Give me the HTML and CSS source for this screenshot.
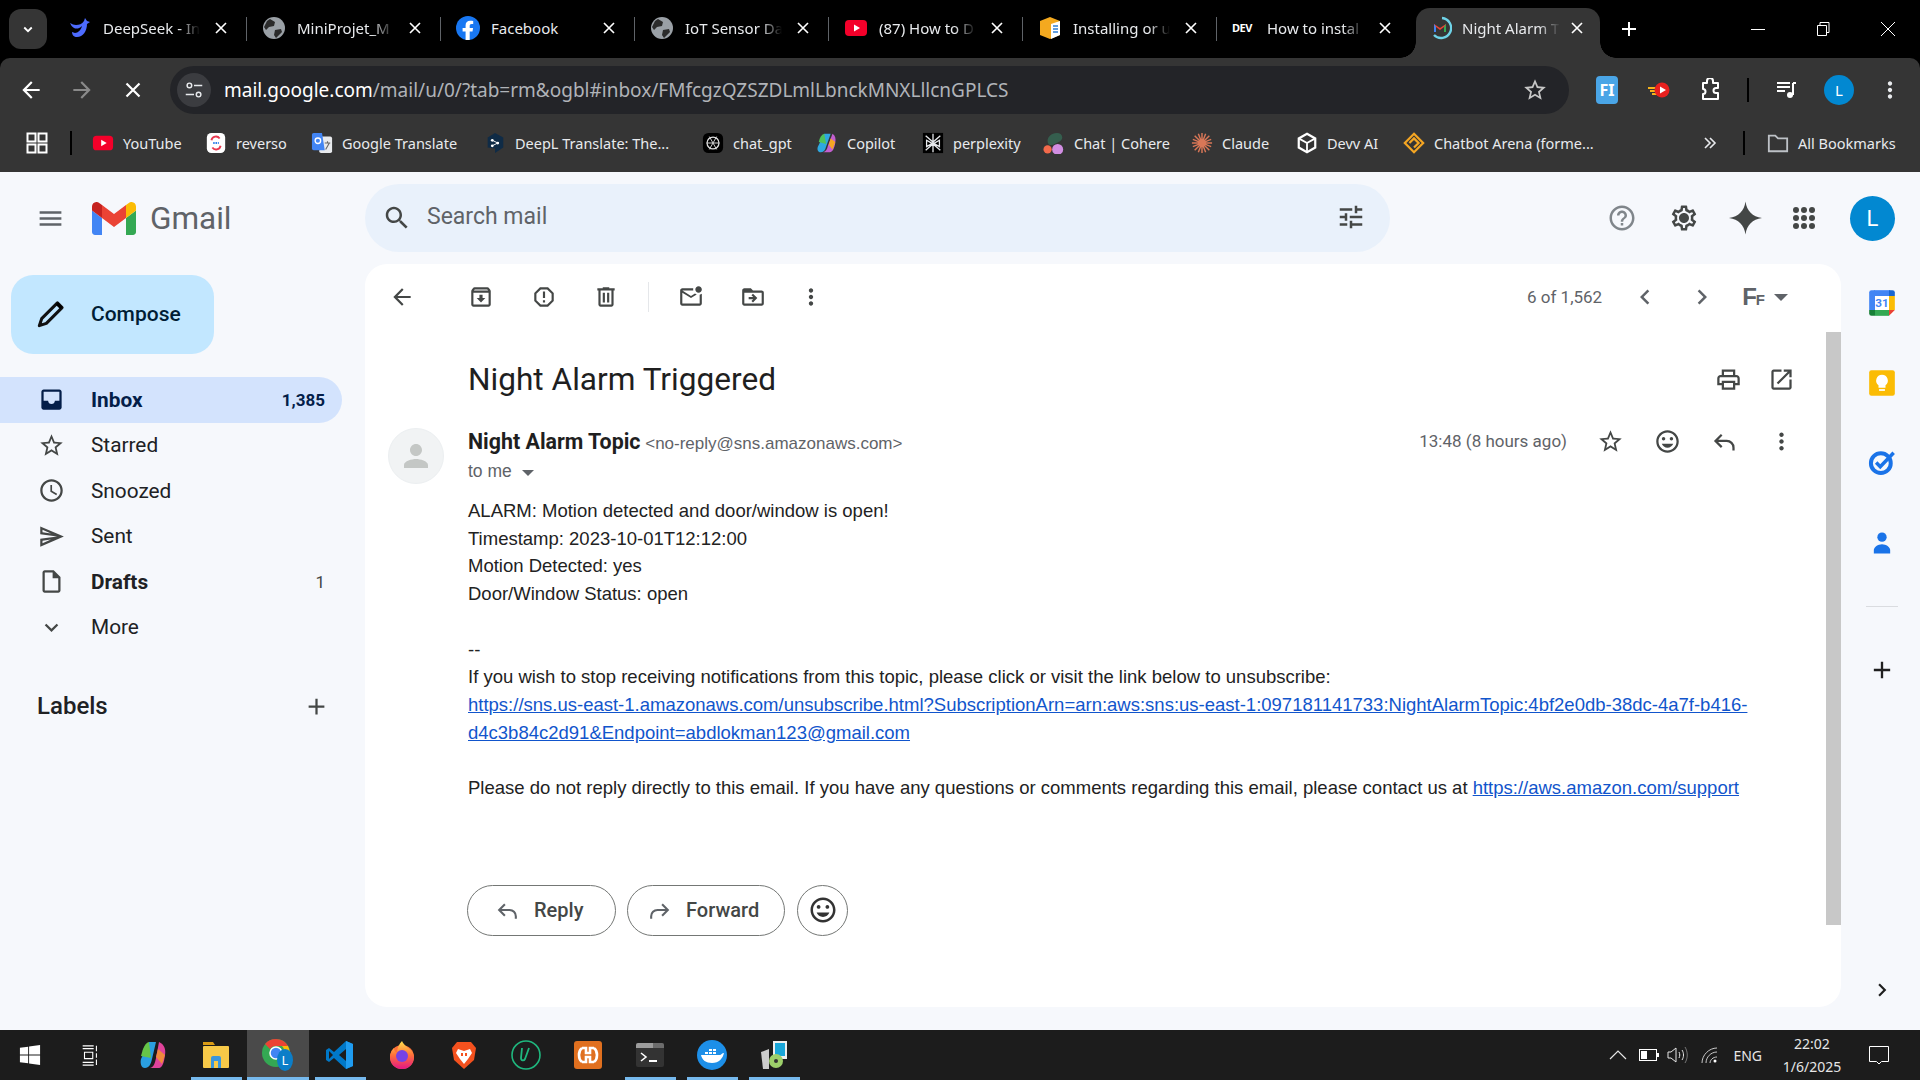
FILE: index.html
```html
<!DOCTYPE html>
<html lang="en">
<head>
    <meta charset="UTF-8">
    <title>Night Alarm Triggered - Gmail</title>
    <link rel="stylesheet" href="styles.css">
</head>
<body>

<svg class="defs" xmlns="http://www.w3.org/2000/svg">
    <symbol id="i-close" viewBox="0 0 24 24"><path d="M6 6l12 12M18 6L6 18" fill="none" stroke="currentColor" stroke-width="2"/></symbol>
    <symbol id="i-globe" viewBox="0 0 24 24"><circle cx="12" cy="12" r="11" fill="#9aa0a6"/><path d="M8 3l5 3-1 4-5 1-3 3-2-3 3-6zM13 14l6-1 1 3-6 6-2-3z" fill="#2b2b2b"/></symbol>
    <symbol id="i-yt" viewBox="0 0 24 24"><rect x="1" y="4" width="22" height="16" rx="4" fill="#f4002a"/><path d="M10 8.5l6 3.5-6 3.5z" fill="#fff"/></symbol>
    <symbol id="i-back" viewBox="0 0 24 24"><path d="M20 11H7.83l5.59-5.59L12 4l-8 8 8 8 1.41-1.41L7.83 13H20v-2z"/></symbol>
    <symbol id="i-star" viewBox="0 0 24 24"><path d="M22 9.24l-7.19-.62L12 2 9.19 8.63 2 9.24l5.46 4.73L5.82 21 12 17.27 18.18 21l-1.63-7.03L22 9.24zM12 15.4l-3.76 2.27 1-4.28-3.32-2.88 4.38-.38L12 6.1l1.71 4.04 4.38.38-3.32 2.88 1 4.28L12 15.4z"/></symbol>
    <symbol id="i-more" viewBox="0 0 24 24"><path d="M12 8c1.1 0 2-.9 2-2s-.9-2-2-2-2 .9-2 2 .9 2 2 2zm0 2c-1.1 0-2 .9-2 2s.9 2 2 2 2-.9 2-2-.9-2-2-2zm0 6c-1.1 0-2 .9-2 2s.9 2 2 2 2-.9 2-2-.9-2-2-2z"/></symbol>
    <symbol id="i-add" viewBox="0 0 24 24"><path d="M19 13h-6v6h-2v-6H5v-2h6V5h2v6h6v2z"/></symbol>
    <symbol id="i-mood" viewBox="0 0 24 24"><path d="M11.99 2C6.47 2 2 6.48 2 12s4.47 10 9.99 10C17.52 22 22 17.52 22 12S17.52 2 11.99 2zM12 20c-4.42 0-8-3.58-8-8s3.58-8 8-8 8 3.58 8 8-3.58 8-8 8zm3.5-9c.83 0 1.5-.67 1.5-1.5S16.33 8 15.5 8 14 8.67 14 9.5s.67 1.5 1.5 1.5zm-7 0c.83 0 1.5-.67 1.5-1.5S9.33 8 8.5 8 7 8.67 7 9.5 7.67 11 8.5 11zm3.5 6.5c2.33 0 4.31-1.46 5.11-3.5H6.89c.8 2.04 2.78 3.5 5.11 3.5z"/></symbol>
    <symbol id="i-reply" viewBox="0 0 24 24"><path d="M9.5 6l-5.5 5.5 5.5 5.5M4 11.5h10a6 6 0 0 1 6 6V20" fill="none" stroke="currentColor" stroke-width="2"/></symbol>
    <symbol id="i-forward" viewBox="0 0 24 24"><path d="M14.5 6l5.5 5.5-5.5 5.5M20 11.5H10a6 6 0 0 0-6 6V20" fill="none" stroke="currentColor" stroke-width="2"/></symbol>
</svg>

<!-- browser tabs -->
<div class="tabstrip">
    <div class="tablist-btn"><svg viewBox="0 0 24 24" width="18" height="18"><path d="M7 10l5 5 5-5" fill="none" stroke="#fff" stroke-width="2.4"/></svg></div>
    <div class="tab">
        <svg class="favicon" viewBox="0 0 24 24"><path d="M2 7c2 1 4 2 6 2 3 0 6-1 8-4l1-3 2 3 3 1-3 2c0 7-4 13-10 13-3 0-5-2-5-5l3 1c3 0 6-3 7-7-3 3-6 3-8 2-2-1-3-3-4-5z" fill="#4d6bfe"/></svg>
        <span class="tab-title">DeepSeek - In</span>
        <svg class="tab-x"><use href="#i-close"/></svg>
    </div>
    <div class="tab">
        <svg class="favicon"><use href="#i-globe"/></svg>
        <span class="tab-title">MiniProjet_M</span>
        <svg class="tab-x"><use href="#i-close"/></svg>
    </div>
    <div class="tab">
        <svg class="favicon" viewBox="0 0 24 24"><circle cx="12" cy="12" r="12" fill="#1877f2"/><path d="M16.5 15.5l.6-3.5h-3.4V9.8c0-1 .5-1.9 2-1.9h1.5v-3S15.400 4.700 14.100 4.700c-2.700 0-4.500 1.600-4.500 4.600V12H6.600v3.500h3V24h4.100v-8.500z" fill="#fff"/></svg>
        <span class="tab-title no-fade">Facebook</span>
        <svg class="tab-x"><use href="#i-close"/></svg>
    </div>
    <div class="tab">
        <svg class="favicon"><use href="#i-globe"/></svg>
        <span class="tab-title">IoT Sensor Da</span>
        <svg class="tab-x"><use href="#i-close"/></svg>
    </div>
    <div class="tab">
        <svg class="favicon"><use href="#i-yt"/></svg>
        <span class="tab-title">(87) How to D</span>
        <svg class="tab-x"><use href="#i-close"/></svg>
    </div>
    <div class="tab">
        <svg class="favicon" viewBox="0 0 24 24"><path d="M12 1l10 4v14l-10 4-10-4V5z" fill="#f4a91f"/><path d="M13 8l9-3v14l-9 4z" fill="#fff"/><path d="M15 10h5M15 13h5M15 16h5" stroke="#2f7fd6" stroke-width="1.500"/></svg>
        <span class="tab-title">Installing or u</span>
        <svg class="tab-x"><use href="#i-close"/></svg>
    </div>
    <div class="tab tab-last">
        <span class="favicon dev-mark">DEV</span>
        <span class="tab-title">How to instal</span>
        <svg class="tab-x"><use href="#i-close"/></svg>
    </div>
    <div class="tab active">
        <svg class="favicon" viewBox="0 0 24 24"><path d="M14 2a10 10 0 1 1-8 17" fill="none" stroke="#6fd3e8" stroke-width="2.400"/><path d="M6 8v8h2v-5l4 3 4-3v5h2V8l-6 4z" fill="#ea4335"/><path d="M6 8v8h2v-5z" fill="#4285f4"/><path d="M16 11v5h2V8z" fill="#34a853"/></svg>
        <span class="tab-title">Night Alarm T</span>
        <svg class="tab-x"><use href="#i-close"/></svg>
    </div>
    <svg class="tab-new"><use href="#i-add"/></svg>
    <div class="window-btns">
        <svg viewBox="0 0 16 16" width="16" height="16"><path d="M1 8.500h14" stroke="#fff" stroke-width="1"/></svg>
        <svg viewBox="0 0 16 16" width="16" height="16"><path d="M2.500 4.500h9v10h-9zM5 4.500V1.500h9v10h-2.500" fill="none" stroke="#fff"/></svg>
        <svg viewBox="0 0 16 16" width="16" height="16"><path d="M1 1l14 14M15 1L1 15" stroke="#fff"/></svg>
    </div>
</div>

<!-- address bar -->
<div class="toolbar">
    <svg class="nav-icon"><use href="#i-back"/></svg>
    <svg class="nav-icon dim flip"><use href="#i-back"/></svg>
    <svg class="nav-icon stop"><use href="#i-close"/></svg>
    <div class="omnibox">
        <div class="site-chip">
            <svg viewBox="0 0 24 24" width="22" height="22"><circle cx="7" cy="7" r="2.500" fill="none" stroke="#e8eaed" stroke-width="1.600"/><path d="M12 7h9M3 17h9" stroke="#e8eaed" stroke-width="1.600"/><circle cx="17" cy="17" r="2.500" fill="none" stroke="#e8eaed" stroke-width="1.600"/></svg>
        </div>
        <div class="url"><span class="host">mail.google.com</span>/mail/u/0/?tab=rm&amp;ogbl#inbox/FMfcgzQZSZDLmlLbnckMNXLllcnGPLCS</div>
        <svg class="url-star"><use href="#i-star"/></svg>
    </div>
    <div class="ext ext-fi">FI</div>
    <svg class="ext-icon" viewBox="0 0 24 24"><path d="M1 10h9M3 13h7M5 16h5" stroke="#f6b21b" stroke-width="2"/><circle cx="15" cy="12" r="7.500" fill="#e8201e"/><path d="M13 8.500l6 3.500-6 3.500z" fill="#fff"/></svg>
    <svg class="ext-icon puzzle" viewBox="0 0 24 24"><path d="M9 5V3a1.500 1.500 0 0 1 6 0v2h5v5h-2a2 2 0 0 0 0 5h2v6H5v-5a2 2 0 0 0 0-5V5z" fill="none" stroke="#fff" stroke-width="2" stroke-linejoin="round"/></svg>
    <div class="tool-sep"></div>
    <svg class="ext-icon media" viewBox="0 0 24 24"><path d="M3 5h13M3 9h13M3 13h8" stroke="#fff" stroke-width="2"/><path d="M19 5v12" stroke="#fff" stroke-width="2"/><circle cx="16" cy="17" r="3" fill="#fff"/><path d="M19 5h3" stroke="#fff" stroke-width="2"/></svg>
    <div class="tool-avatar">L</div>
    <svg class="tool-menu"><use href="#i-more"/></svg>
</div>

<!-- bookmarks -->
<div class="bookmarks">
    <div class="bm-apps">
        <svg viewBox="0 0 22 22" width="22" height="22"><path d="M1.500 1.500h8v8h-8zM12.500 1.500h8v8h-8zM1.500 12.500h8v8h-8zM12.500 12.500h8v8h-8z" fill="none" stroke="#fff" stroke-width="2"/></svg>
        <div class="bm-sep"></div>
    </div>
    <div class="bm"><svg class="bm-icon"><use href="#i-yt"/></svg>YouTube</div>
    <div class="bm"><svg class="bm-icon" viewBox="0 0 24 24"><rect x="2" y="1" width="20" height="22" rx="5" fill="#fff"/><path d="M7 9a5 5 0 0 1 9-2M17 15a5 5 0 0 1-9 2" fill="none" stroke="#e8384f" stroke-width="2"/><path d="M9 12h6" stroke="#1a73e8" stroke-width="2" stroke-dasharray="1.500 1"/></svg>reverso</div>
    <div class="bm"><svg class="bm-icon" viewBox="0 0 24 24"><rect x="9" y="5" width="14" height="18" rx="2" fill="#e8eaed"/><path d="M1 3a2 2 0 0 1 2-2h9l3 19H3a2 2 0 0 1-2-2z" fill="#4285f4"/><path d="M15 12h6M18 10v2M16 19l4-7" stroke="#666" stroke-width="1.200"/><circle cx="7.500" cy="9.500" r="3" fill="none" stroke="#fff" stroke-width="1.500"/></svg>Google Translate</div>
    <div class="bm"><svg class="bm-icon" viewBox="0 0 24 24"><path d="M12 1l9 5v11l-9 6-0-5-8-1V6z" fill="#0f2b46"/><circle cx="9" cy="9" r="1.500" fill="#fff"/><circle cx="9" cy="15" r="1.500" fill="#fff"/><circle cx="15" cy="12" r="1.500" fill="#fff"/><path d="M9 9l6 3-6 3" stroke="#fff" fill="none"/></svg>DeepL Translate: The...</div>
    <div class="bm"><svg class="bm-icon" viewBox="0 0 24 24"><rect x="1" y="1" width="22" height="22" rx="6" fill="#000"/><circle cx="12" cy="12" r="6.500" fill="none" stroke="#ddd" stroke-width="1.400"/><path d="M8 5l8 14M16 5L8 19M5 12h14" stroke="#ddd"/></svg>chat_gpt</div>
    <div class="bm"><svg class="bm-icon" viewBox="0 0 24 24"><path d="M9 2h7l-5 14c-1 4-3 6-6 6-3 0-4-3-3-6z" fill="#2fa8e0"/><path d="M9 2c-3 1-5 4-6 9l8 2z" fill="#4fc35b"/><path d="M15 22H8c3-1 4-3 5-7l5-13c3 2 4 5 3 10-1 6-3 10-6 10z" fill="#c35fd0"/><path d="M16 7l5 4-3 8-4-5z" fill="#f5a623"/></svg>Copilot</div>
    <div class="bm"><svg class="bm-icon" viewBox="0 0 24 24"><rect x="1" y="1" width="22" height="22" fill="#000"/><path d="M12 2v20M4 4l8 7 8-7M4 20l8-7 8 7M5 9v7l7-4 7 4V9l-7 4z" fill="none" stroke="#e8eaed" stroke-width="1.400"/></svg>perplexity</div>
    <div class="bm"><svg class="bm-icon" viewBox="0 0 24 24"><path d="M5 10c0-5 4-9 10-9 4 0 6 2 6 5 0 4-5 5-8 7-3 2-8 2-8-3z" fill="#355e4e"/><circle cx="5" cy="19" r="4.500" fill="#f26a4b"/><circle cx="16" cy="19" r="6" fill="#d18ee2"/></svg>Chat | Cohere</div>
    <div class="bm"><svg class="bm-icon" viewBox="0 0 24 24"><path d="M12 1v22M1 12h22M4 4l16 16M20 4L4 20M8 2l8 20M16 2L8 22M2 8l20 8M22 8L2 16" stroke="#d97757" stroke-width="1.600"/></svg>Claude</div>
    <div class="bm"><svg class="bm-icon" viewBox="0 0 24 24"><path d="M12 2l9 5v10l-9 5-9-5V7z" fill="none" stroke="#fff" stroke-width="2.400"/><path d="M3 7l9 5 9-5M12 12v10" fill="none" stroke="#fff" stroke-width="2"/></svg>Devv AI</div>
    <div class="bm"><svg class="bm-icon" viewBox="0 0 24 24"><path d="M12 2l10 10-10 10L2 12z" fill="none" stroke="#f5a623" stroke-width="2.400"/><path d="M7 12l5-5 5 5-5 5" fill="none" stroke="#f5a623" stroke-width="2.400"/></svg>Chatbot Arena (forme...</div>
    <div class="bm-more">
        <svg viewBox="0 0 14 14" width="14" height="14"><path d="M2 2l5 5-5 5M7 2l5 5-5 5" fill="none" stroke="#e8eaed" stroke-width="1.600"/></svg>
        <div class="bm-sep"></div>
    </div>
    <div class="bm"><svg class="bm-icon" viewBox="0 0 24 24"><path d="M2 4h7l3 3h10v14H2z" fill="none" stroke="#bdc1c6" stroke-width="2"/></svg>All Bookmarks</div>
</div>

<!-- gmail -->
<div class="gmail">
    <header class="g-head">
        <div class="brand">
            <svg class="burger" viewBox="0 0 24 24"><path d="M3 18h18v-2H3v2zm0-5h18v-2H3v2zm0-7v2h18V6H3z"/></svg>
            <svg class="g-logo" viewBox="52 42 88 66"><path fill="#4285f4" d="M58 108h14V74L52 59v43c0 3.320 2.690 6 6 6"/><path fill="#34a853" d="M120 108h14c3.320 0 6-2.690 6-6V59l-20 15"/><path fill="#fbbc04" d="M120 48v26l20-15v-8c0-7.420-8.470-11.650-14.400-7.200"/><path fill="#ea4335" d="M72 74V48l24 18 24-18v26L96 92"/><path fill="#c5221f" d="M52 51v8l20 15V48l-5.600-4.200c-5.940-4.450-14.400-.22-14.400 7.200"/></svg>
            <span class="g-word">Gmail</span>
        </div>
        <div class="search">
            <svg class="search-icon" viewBox="0 0 24 24"><path d="M15.500 14h-.79l-.28-.27C15.410 12.590 16 11.110 16 9.500 16 5.910 13.090 3 9.500 3S3 5.910 3 9.500 5.910 16 9.500 16c1.610 0 3.090-.59 4.230-1.570l.27.28v.79l5 4.990L20.490 19l-4.990-5zm-6 0C7.010 14 5 11.990 5 9.500S7.010 5 9.500 5 14 7.010 14 9.500 11.990 14 9.500 14z"/></svg>
            <span class="search-text">Search mail</span>
            <svg class="search-tune" viewBox="0 0 24 24"><path d="M3 17v2h6v-2H3zM3 5v2h10V5H3zm10 16v-2h8v-2h-8v-2h-2v6h2zM7 9v2H3v2h4v2h2V9H7zm14 4v-2H11v2h10zm-6-4h2V7h4V5h-4V3h-2v6z"/></svg>
        </div>
        <div class="head-icons">
            <svg class="help" viewBox="0 0 24 24"><path d="M11 18h2v-2h-2v2zm1-16C6.480 2 2 6.480 2 12s4.480 10 10 10 10-4.480 10-10S17.520 2 12 2zm0 18c-4.410 0-8-3.590-8-8s3.590-8 8-8 8 3.590 8 8-3.590 8-8 8zm0-14c-2.210 0-4 1.790-4 4h2c0-1.100.9-2 2-2s2 .9 2 2c0 2-3 1.750-3 5h2c0-2.250 3-2.500 3-5 0-2.210-1.790-4-4-4z"/></svg>
            <svg viewBox="0 0 24 24"><path d="M19.430 12.980c.04-.32.07-.64.07-.98 0-.34-.03-.66-.07-.98l2.110-1.650c.19-.15.24-.42.12-.64l-2-3.460c-.09-.16-.26-.25-.44-.25-.06 0-.12.01-.17.03l-2.490 1c-.52-.4-1.080-.73-1.690-.98l-.38-2.650C14.460 2.180 14.250 2 14 2h-4c-.25 0-.46.18-.49.42l-.38 2.650c-.61.25-1.170.59-1.690.98l-2.490-1c-.06-.02-.12-.03-.18-.03-.17 0-.34.09-.43.25l-2 3.460c-.13.22-.07.49.12.64l2.110 1.650c-.04.32-.07.65-.07.98 0 .33.03.66.07.98l-2.110 1.650c-.19.15-.24.42-.12.64l2 3.460c.09.16.26.25.44.25.06 0 .12-.01.17-.03l2.490-1c.52.4 1.080.73 1.690.98l.38 2.650c.03.24.24.42.49.42h4c.25 0 .46-.18.49-.42l.38-2.650c.61-.25 1.170-.59 1.690-.98l2.490 1c.06.02.12.03.18.03.17 0 .34-.09.43-.25l2-3.460c.12-.22.07-.49-.12-.64l-2.110-1.650zm-1.980-1.710c.04.31.05.52.05.73 0 .21-.02.43-.05.73l-.14 1.130.89.7 1.080.84-.7 1.210-1.270-.51-1.040-.42-.9.68c-.43.32-.84.56-1.250.73l-1.060.43-.16 1.130-.2 1.350h-1.400l-.19-1.350-.16-1.130-1.060-.43c-.43-.18-.83-.41-1.230-.71l-.91-.7-1.060.43-1.270.51-.7-1.210 1.080-.84.89-.7-.14-1.130c-.03-.31-.05-.54-.05-.74s.02-.43.05-.73l.14-1.130-.89-.7-1.080-.84.7-1.210 1.270.51 1.040.42.9-.68c.43-.32.84-.56 1.250-.73l1.060-.43.16-1.130.2-1.350h1.390l.19 1.350.16 1.130 1.060.43c.43.18.83.41 1.230.71l.91.7 1.060-.43 1.270-.51.7 1.210-1.070.85-.89.7.14 1.130zM12 8c-2.210 0-4 1.790-4 4s1.790 4 4 4 4-1.790 4-4-1.790-4-4-4z"/></svg>
            <svg class="spark" viewBox="0 0 24 24"><path d="M12 0c1 7 5 11 12 12-7 1-11 5-12 12-1-7-5-11-12-12 7-1 11-5 12-12z"/></svg>
            <svg class="apps" viewBox="0 0 24 24"><circle cx="4" cy="4" r="3"/><circle cx="12" cy="4" r="3"/><circle cx="20" cy="4" r="3"/><circle cx="4" cy="12" r="3"/><circle cx="12" cy="12" r="3"/><circle cx="20" cy="12" r="3"/><circle cx="4" cy="20" r="3"/><circle cx="12" cy="20" r="3"/><circle cx="20" cy="20" r="3"/></svg>
            <div class="g-avatar">L</div>
        </div>
    </header>

    <div class="g-body">
        <aside class="sidebar">
            <div class="compose">
                <svg viewBox="0 0 24 24"><path d="M17.500 2.500l4 4L8 20l-6 2 2-6z" fill="none" stroke="#111" stroke-width="2.600" stroke-linejoin="round"/><path d="M16 4l4 4 2-2-4-4z"/></svg>
                <span>Compose</span>
            </div>
            <nav class="nav">
                <div class="nav-item current">
                    <svg viewBox="0 0 24 24"><path d="M19 3H5c-1.100 0-2 .9-2 2v14c0 1.100.9 2 2 2h14c1.100 0 2-.9 2-2V5c0-1.100-.9-2-2-2zm0 10h-4c0 1.660-1.350 3-3 3s-3-1.340-3-3H5V5h14v8z"/></svg>
                    <span class="nav-label">Inbox</span><span class="nav-count">1,385</span>
                </div>
                <div class="nav-item">
                    <svg><use href="#i-star"/></svg>
                    <span class="nav-label">Starred</span>
                </div>
                <div class="nav-item">
                    <svg viewBox="0 0 24 24"><path d="M11.990 2C6.470 2 2 6.480 2 12s4.470 10 9.990 10C17.520 22 22 17.520 22 12S17.520 2 11.990 2zM12 20c-4.420 0-8-3.580-8-8s3.580-8 8-8 8 3.580 8 8-3.580 8-8 8zm.5-13H11v6l5.250 3.150.75-1.230-4.500-2.670z"/></svg>
                    <span class="nav-label">Snoozed</span>
                </div>
                <div class="nav-item">
                    <svg viewBox="0 0 24 24"><path d="M4.010 6.030l7.510 3.220-7.520-1 .01-2.220m7.500 8.720L4 17.970v-2.220l7.510-1M2.010 3L2 10l15 2-15 2 .01 7L23 12 2.010 3z"/></svg>
                    <span class="nav-label">Sent</span>
                </div>
                <div class="nav-item bold">
                    <svg viewBox="0 0 24 24"><path d="M14 2H6c-1.100 0-1.990.9-1.990 2L4 20c0 1.100.89 2 1.990 2H18c1.100 0 2-.9 2-2V8l-6-6zM6 20V4h7v5h5v11H6z"/></svg>
                    <span class="nav-label">Drafts</span><span class="nav-count light">1</span>
                </div>
                <div class="nav-item">
                    <svg viewBox="0 0 24 24"><path d="M16.590 8.590L12 13.170 7.410 8.590 6 10l6 6 6-6z"/></svg>
                    <span class="nav-label">More</span>
                </div>
            </nav>
            <div class="labels">
                <span>Labels</span>
                <svg><use href="#i-add"/></svg>
            </div>
        </aside>

        <main class="card">
            <div class="scroll-thumb"></div>
            <div class="mail-bar">
                <div class="mbtn back"><svg><use href="#i-back"/></svg></div>
                <div class="mbtn first"><svg viewBox="0 0 24 24"><path d="M20.540 5.230l-1.390-1.680C18.880 3.210 18.470 3 18 3H6c-.47 0-.88.21-1.160.55L3.460 5.230C3.170 5.570 3 6.020 3 6.500V19c0 1.100.9 2 2 2h14c1.100 0 2-.9 2-2V6.500c0-.48-.17-.93-.46-1.270zM6.240 5h11.520l.81.97H5.440l.8-.97zM5 19V8h14v11H5zm8.450-9h-2.900v3H8l4 4 4-4h-2.550z"/></svg></div>
                <div class="mbtn"><svg viewBox="0 0 24 24"><path d="M15.730 3H8.270L3 8.270v7.460L8.270 21h7.460L21 15.730V8.270L15.730 3zM19 14.900L14.900 19H9.100L5 14.900V9.100L9.100 5h5.800L19 9.100v5.800zM11 7h2v6h-2zM11 15h2v2h-2z"/></svg></div>
                <div class="mbtn"><svg viewBox="0 0 24 24"><path d="M15 4V3H9v1H4v2h1v13c0 1.100.9 2 2 2h10c1.100 0 2-.9 2-2V6h1V4h-5zm2 15H7V6h10v13zM9 8h2v9H9zm4 0h2v9h-2z"/></svg></div>
                <div class="mbar-sep"></div>
                <div class="mbtn"><svg viewBox="0 0 24 24"><path d="M22 8.980V18c0 1.100-.9 2-2 2H4c-1.100 0-2-.9-2-2V6c0-1.100.9-2 2-2h10.100c-.06.32-.1.66-.1 1s.04.68.1 1H4l8 5 3.670-2.290c.47.43 1.020.76 1.630.98L12 13 4 8v10h16V9.900c.74-.15 1.420-.48 2-.92zM16 5c0 1.660 1.340 3 3 3s3-1.340 3-3-1.340-3-3-3-3 1.340-3 3z"/></svg></div>
                <div class="mbtn"><svg viewBox="0 0 24 24"><path d="M20 6h-8l-2-2H4c-1.100 0-1.990.9-1.990 2L2 18c0 1.100.9 2 2 2h16c1.100 0 2-.9 2-2V8c0-1.100-.9-2-2-2zm0 12H4V8h16v10zm-8.010-9l-1.410 1.410L12.160 12H8v2h4.160l-1.590 1.590L11.990 17 16 13.010 11.990 9z"/></svg></div>
                <div class="mbtn tight"><svg><use href="#i-more"/></svg></div>
                <div class="pager">
                    <span class="pager-text">6 of 1,562</span>
                    <svg class="pg" viewBox="0 0 24 24"><path d="M15.410 7.410L14 6l-6 6 6 6 1.410-1.410L10.830 12z"/></svg>
                    <svg class="pg" viewBox="0 0 24 24"><path d="M10 6L8.590 7.410 13.170 12l-4.580 4.590L10 18l6-6z"/></svg>
                    <span class="font-mark">F<small>F</small></span>
                    <span class="caret"></span>
                </div>
            </div>

            <div class="subject-row">
                <h1 class="subject">Night Alarm Triggered</h1>
                <div class="subject-tools">
                    <svg viewBox="0 0 24 24"><path d="M19 8h-1V3H6v5H5c-1.660 0-3 1.340-3 3v6h4v4h12v-4h4v-6c0-1.660-1.340-3-3-3zM8 5h8v3H8V5zm8 12v2H8v-4h8v2zm2-2v-2H6v2H4v-4c0-.55.45-1 1-1h14c.55 0 1 .45 1 1v4h-2z"/></svg>
                    <svg viewBox="0 0 24 24"><path d="M19 19H5V5h7V3H5c-1.110 0-2 .9-2 2v14c0 1.100.89 2 2 2h14c1.100 0 2-.9 2-2v-7h-2v7zM14 3v2h3.590l-9.830 9.830 1.410 1.410L19 6.410V10h2V3h-7z"/></svg>
                </div>
            </div>

            <div class="message">
                <div class="sender-pic"><svg viewBox="0 0 24 24"><path d="M12 12c2.210 0 4-1.790 4-4s-1.790-4-4-4-4 1.790-4 4 1.790 4 4 4zm0 2c-2.670 0-8 1.340-8 4v2h16v-2c0-2.660-5.330-4-8-4z"/></svg></div>
                <div class="msg-main">
                    <div class="msg-head">
                        <div class="from"><b>Night Alarm Topic</b> <span>&lt;no-reply@sns.amazonaws.com&gt;</span></div>
                        <div class="msg-tools">
                            <span class="stamp">13:48 (8 hours ago)</span>
                            <svg><use href="#i-star"/></svg>
                            <svg><use href="#i-mood"/></svg>
                            <svg><use href="#i-reply"/></svg>
                            <svg><use href="#i-more"/></svg>
                        </div>
                    </div>
                    <div class="to-me">to me <span class="caret small"></span></div>
                    <div class="msg-text">
                        ALARM: Motion detected and door/window is open!<br>
                        Timestamp: 2023-10-01T12:12:00<br>
                        Motion Detected: yes<br>
                        Door/Window Status: open<br>
                        <br>
                        --<br>
                        If you wish to stop receiving notifications from this topic, please click or visit the link below to unsubscribe:<br>
                        <a href="#">https://sns.us-east-1.amazonaws.com/unsubscribe.html?SubscriptionArn=arn:aws:sns:us-east-1:097181141733:NightAlarmTopic:4bf2e0db-38dc-4a7f-b416-d4c3b84c2d91&amp;Endpoint=abdlokman123@gmail.com</a><br>
                        <br>
                        Please do not reply directly to this email. If you have any questions or comments regarding this email, please contact us at <a href="#">https://aws.amazon.com/support</a>
                    </div>
                    <div class="reply-row">
                        <div class="pill reply"><svg><use href="#i-reply"/></svg>Reply</div>
                        <div class="pill forward"><svg><use href="#i-forward"/></svg>Forward</div>
                        <div class="pill smile"><svg><use href="#i-mood"/></svg></div>
                    </div>
                </div>
            </div>
        </main>

        <aside class="sidepanel">
            <div class="sp-item">
                <svg viewBox="0 0 24 24"><path d="M2 2h20v20H2z" fill="#fff"/><path d="M5 1h14v5H5z" fill="#4285f4"/><path d="M1 3a2 2 0 0 1 2-2h3v17H1z" fill="#4285f4"/><path d="M18 1h3a2 2 0 0 1 2 2v3h-5z" fill="#1967d2"/><path d="M18 6h5v12h-5z" fill="#fbbc04"/><path d="M6 18h12v5H6z" fill="#34a853"/><path d="M1 18h5v5H3a2 2 0 0 1-2-2z" fill="#188038"/><path d="M18 18h5l-5 5z" fill="#ea4335"/><text x="12" y="15.500" class="cal-num">31</text></svg>
            </div>
            <div class="sp-item">
                <svg viewBox="0 0 24 24"><rect x="1" y="1" width="22" height="22" rx="2" fill="#fbbc04"/><path d="M12 5a5 5 0 0 0-3 9v2h6v-2a5 5 0 0 0-3-9z" fill="#fff"/><path d="M9.500 18h5" stroke="#fff" stroke-width="1.500"/></svg>
            </div>
            <div class="sp-item tasks">
                <svg viewBox="0 0 24 24"><circle cx="11" cy="13" r="8.500" fill="none" stroke="#1a73e8" stroke-width="3.400"/><path d="M7 12.500l3.500 3.500L22 4" fill="none" stroke="#1a73e8" stroke-width="3"/></svg>
            </div>
            <div class="sp-item">
                <svg viewBox="0 0 24 24"><circle cx="12" cy="7" r="4" fill="#1a73e8"/><path d="M5 21v-3c0-2.500 3.500-5 7-5s7 2.500 7 5v3z" fill="#1a73e8"/></svg>
            </div>
            <div class="sp-divider"></div>
            <svg class="sp-add"><use href="#i-add"/></svg>
            <svg class="sp-chevron" viewBox="0 0 24 24"><path d="M10 6L8.590 7.410 13.170 12l-4.580 4.590L10 18l6-6z"/></svg>
        </aside>
    </div>
</div>

<!-- windows taskbar -->
<footer class="taskbar">
    <div class="tb tb-start"><svg viewBox="0 0 24 24" width="22" height="22"><path d="M1 4.200l9-1.300v8.600H1zM11 2.700L23 1v10.500H11zM1 12.500h9v8.600l-9-1.300zM11 12.500h12V23l-12-1.700z" fill="#fff"/></svg></div>
    <div class="tb tb-view"><svg viewBox="0 0 24 24" width="22" height="24"><path d="M4 2h12M4 5h12M6 9h9v7H6zM4 20h12M4 23h12M19 2v6M19 10v5M19 17v6" fill="none" stroke="#fff" stroke-width="1.200"/></svg></div>
    <div class="tb tb-copilot"><svg viewBox="0 0 30 30" width="30" height="30"><path d="M10 2h7l-4 17c-1 5-3 9-7 9-4 0-5-5-4-9z" fill="#2a9fe0"/><path d="M10 2c-4 1-6 6-8 14l10 2z" fill="#66c447"/><path d="M20 28h-9c4-1 5-5 6-10l3-16c5 2 7 7 6 13-1 8-3 13-6 13z" fill="#e0439b"/><path d="M19 9l7 6-3 9-6-7z" fill="#f08a3c"/></svg></div>
    <div class="tb running"><svg viewBox="0 0 30 30" width="30" height="30"><path d="M2 2h10l2 3H2z" fill="#d99b14"/><rect x="2" y="6" width="26" height="22" rx="1" fill="#f7c948"/><path d="M10 28V18a2 2 0 0 1 2-2h6a2 2 0 0 1 2 2v10h-3v-7h-4v7z" fill="#3a96dd"/></svg></div>
    <div class="tb running current"><svg viewBox="0 0 34 34" width="34" height="34"><circle cx="15" cy="15" r="14" fill="#34a853"/><path d="M15 1a14 14 0 0 1 12 7H15a7 7 0 0 0-6 3L4 6a14 14 0 0 1 11-5z" fill="#ea4335"/><path d="M27 8a14 14 0 0 1-9 20l5-13a7 7 0 0 0-2-7z" fill="#fbbc04"/><circle cx="15" cy="15" r="6" fill="#4285f4" stroke="#fff" stroke-width="1.500"/><ellipse cx="24" cy="22" rx="8" ry="11" fill="#0b7ec8"/><text x="24" y="27" class="chrome-l">L</text></svg></div>
    <div class="tb running"><svg viewBox="0 0 30 30" width="30" height="30"><path d="M21 1l7 3v22l-7 3-12-11-5 4-3-2v-10l3-2 5 4z" fill="#0078c8"/><path d="M21 1l7 3v22l-7 3z" fill="#1f9cf0"/><path d="M21 9l-7 6 7 6z" fill="#1c1c1c"/><path d="M4 11v8l4-4z" fill="#1c1c1c"/></svg></div>
    <div class="tb"><svg viewBox="0 0 30 30" width="30" height="30"><circle cx="15" cy="17" r="12" fill="#ff7139"/><path d="M15 1c2 5 8 7 11 12 3 8-2 16-11 16C7 29 3 23 3 17c0-4 2-7 4-9 0 3 1 4 3 5 0-5 2-9 5-12z" fill="url(#ff)"/><circle cx="15" cy="16" r="6" fill="#7542e5"/><defs><linearGradient id="ff" x1="0" y1="0" x2="0" y2="1"><stop offset="0" stop-color="#ffe14d"/><stop offset=".5" stop-color="#ff7139"/><stop offset="1" stop-color="#e31587"/></linearGradient></defs></svg></div>
    <div class="tb"><svg viewBox="0 0 30 30" width="30" height="30"><path d="M8 2h14l5 6-2 12-10 9-10-9L3 8z" fill="#f4511e"/><path d="M9 9l6 2 6-2 2 4-4 6-4 5-4-5-4-6z" fill="#fff"/><path d="M12 13h2v3h-2zM16 13h2v3h-2z" fill="#f4511e"/></svg></div>
    <div class="tb"><svg viewBox="0 0 30 30" width="30" height="30"><ellipse cx="15" cy="15" rx="14" ry="14" fill="none" stroke="#1fb77e" stroke-width="1.600"/><path d="M11 8l-1 10c0 3 3 3 4 1l4-11" fill="none" stroke="#1fb77e" stroke-width="1.800"/></svg></div>
    <div class="tb"><svg viewBox="0 0 30 30" width="30" height="30"><rect x="1" y="1" width="28" height="28" rx="3" fill="#e0701f"/><path d="M9 8h4v5h4V8h4M9 22h4v-5h4v5h4" fill="none" stroke="#fff" stroke-width="2.600"/><path d="M9 8c-4 3-4 11 0 14M21 8c4 3 4 11 0 14" fill="none" stroke="#fff" stroke-width="2.600"/></svg></div>
    <div class="tb running"><svg viewBox="0 0 30 30" width="30" height="30"><rect x="1" y="3" width="28" height="24" rx="2" fill="#333"/><path d="M1 5a2 2 0 0 1 2-2h15v5H1z" fill="#9c9c9c"/><path d="M18 3h9a2 2 0 0 1 2 2v3H18z" fill="#6c6c6c"/><path d="M6 13l5 4-5 4" fill="none" stroke="#fff" stroke-width="1.600"/><path d="M14 21h8" stroke="#fff" stroke-width="2"/></svg></div>
    <div class="tb running"><svg viewBox="0 0 30 30" width="30" height="30"><circle cx="15" cy="15" r="15" fill="#1d8fe8"/><path d="M4 15h19c1 0 2-2 4-2-1 5-5 10-12 10-6 0-10-3-11-8z" fill="#fff"/><path d="M8 12h3v2H8zM12 12h3v2h-3zM16 12h3v2h-3zM12 9h3v2h-3zM16 9h3v2h-3z" fill="#fff"/></svg></div>
    <div class="tb running"><svg viewBox="0 0 30 30" width="30" height="30"><rect x="14" y="1" width="14" height="18" fill="#eee"/><rect x="16" y="3" width="10" height="13" fill="#19a6d9"/><path d="M2 12l8-3v20H4z" fill="#ccc"/><circle cx="17" cy="21" r="7" fill="#9ccf6a"/><circle cx="17" cy="21" r="2" fill="#333"/></svg></div>

    <div class="tray">
        <svg viewBox="0 0 18 10" width="18" height="10"><path d="M1 9l8-8 8 8" fill="none" stroke="#e6e6e6" stroke-width="1.200"/></svg>
        <svg viewBox="0 0 20 12" width="20" height="12"><rect x=".5" y=".5" width="17" height="11" fill="none" stroke="#fff"/><rect x="2" y="2" width="6" height="8" fill="#fff"/><path d="M18 4h2v4h-2z" fill="#fff"/></svg>
        <svg class="tray-vol" viewBox="0 0 22 18" width="22" height="18"><path d="M1 6h3l5-4v14l-5-4H1zM12 6c1 2 1 4 0 6M15 4c2 3 2 7 0 10" fill="none" stroke="#e6e6e6"/><path d="M18 1c3 5 3 11 0 16" fill="none" stroke="#777"/></svg>
        <svg viewBox="0 0 18 18" width="18" height="18"><path d="M1 17C1 9 8 2 16 2M5 17c0-6 5-11 11-11M9 17c0-3 3-6 7-6" fill="none" stroke="#c9c9c9"/><circle cx="14" cy="15" r="1.500" fill="#fff"/></svg>
        <span class="tray-lang">ENG</span>
        <div class="clock"><span>22:02</span><span>1/6/2025</span></div>
        <svg class="notif" viewBox="0 0 20 20" width="20" height="20"><path d="M.5 1.500h19v15h-7l-2.500 2.500-2.500-2.500h-7z" fill="none" stroke="#fff"/></svg>
    </div>
</footer>

</body>
</html>
```

FILE: styles.css
```css
* {
    box-sizing: border-box;
}
html, body {
    margin: 0;
    height: 100%;
}
body {
    width: 1920px;
    height: 1080px;
    overflow: hidden;
    display: flex;
    flex-direction: column;
    font-family: "Noto Sans", "Liberation Sans", sans-serif;
    background: #000;
}
.defs {
    display: none;
}

/* browser tabs */
.tabstrip {
    height: 58px;
    flex: none;
    display: flex;
    align-items: flex-start;
    background: #000;
    color: #e8eaed;
}
.tablist-btn {
    width: 38px;
    height: 40px;
    margin: 9px 6px 0 9px;
    background: #353535;
    border-radius: 12px;
    display: flex;
    align-items: center;
    justify-content: center;
}
.tab {
    width: 194px;
    height: 41px;
    margin-top: 8px;
    padding-left: 15px;
    padding-bottom: 2px;
    display: flex;
    align-items: center;
    position: relative;
    font-size: 15px;
}
.tab::after {
    content: "";
    position: absolute;
    right: 0;
    top: 9px;
    height: 24px;
    width: 1px;
    background: #5f6368;
}
.tab-last::after, .tab.active::after {
    display: none;
}
.favicon {
    width: 24px;
    height: 24px;
    flex: none;
}
.dev-mark {
    font-size: 11px;
    font-weight: 700;
    line-height: 24px;
    letter-spacing: -0.5px;
    color: #fff;
}
.tab-title {
    width: 97px;
    margin-left: 11px;
    white-space: nowrap;
    overflow: hidden;
    -webkit-mask-image: linear-gradient(to right, #000 78%, transparent);
    mask-image: linear-gradient(to right, #000 78%, transparent);
}
.tab-title.no-fade {
    -webkit-mask-image: none;
    mask-image: none;
}
.tab-x {
    width: 20px;
    height: 20px;
    margin-left: 11px;
    color: #fff;
    flex: none;
}
.tab.active {
    width: 184px;
    height: 50px;
    margin: 8px 5px 0;
    padding-left: 12px;
    padding-bottom: 10px;
    background: #353535;
    border-radius: 14px 14px 0 0;
}
.tab.active .tab-title {
    width: 98px;
    margin-left: 10px;
}
.tab.active .tab-x {
    margin-left: 7px;
}
.tab.active::before {
    content: "";
    position: absolute;
    left: -16px;
    right: -16px;
    bottom: 0;
    height: 16px;
    background:
        radial-gradient(circle at 0 0, #000 15.5px, #353535 16px) left bottom / 16px 16px no-repeat,
        radial-gradient(circle at 100% 0, #000 15.5px, #353535 16px) right bottom / 16px 16px no-repeat;
    z-index: 0;
}
.tab-new {
    width: 24px;
    height: 24px;
    margin: 17px 0 0 12px;
    fill: #fff;
}
.window-btns {
    margin-left: auto;
    width: 194px;
    height: 40px;
    padding: 0 24px 0 24px;
    display: flex;
    align-items: center;
    justify-content: space-between;
    margin-top: 9px;
}

/* address bar */
.toolbar {
    height: 57px;
    flex: none;
    display: flex;
    align-items: center;
    background: #353535;
    border-radius: 10px 10px 0 0;
    padding-left: 18px;
    padding-top: 6px;
}
.nav-icon {
    width: 26px;
    height: 26px;
    margin-right: 25px;
    fill: #fff;
    color: #fff;
    flex: none;
}
.nav-icon.dim {
    fill: #8a8a8a;
}
.nav-icon.flip {
    transform: scaleX(-1);
}
.omnibox {
    width: 1399px;
    height: 48px;
    flex: none;
    margin-left: -1px;
    background: #232428;
    border-radius: 24px;
    display: flex;
    align-items: center;
    padding-left: 7px;
}
.site-chip {
    width: 34px;
    height: 34px;
    border-radius: 50%;
    background: #3b3c40;
    display: flex;
    align-items: center;
    justify-content: center;
    flex: none;
}
.url {
    margin-left: 13px;
    font-size: 19px;
    color: #b0b3b8;
    white-space: nowrap;
    flex: 1;
}
.url .host {
    color: #fff;
}
.url-star {
    width: 26px;
    height: 26px;
    fill: #c7c7c7;
    margin-right: 21px;
}
.ext {
    width: 22px;
    height: 28px;
    margin-left: 27px;
    background: #4aa5e6;
    border-radius: 4px;
    color: #fff;
    font-size: 16px;
    font-weight: 700;
    line-height: 28px;
    text-align: center;
    flex: none;
}
.ext-icon {
    width: 24px;
    height: 24px;
    margin-left: 29px;
    flex: none;
}
.ext-icon.puzzle {
    margin-left: 27px;
}
.tool-sep {
    width: 2px;
    height: 24px;
    margin-left: 25px;
    background: #000;
}
.ext-icon.media {
    margin-left: 25px;
}
.tool-avatar {
    width: 30px;
    height: 30px;
    margin-left: 26px;
    border-radius: 50%;
    background: #0288d1;
    color: #fff;
    font-size: 15px;
    line-height: 30px;
    text-align: center;
}
.tool-menu {
    width: 26px;
    height: 26px;
    margin-left: 23px;
    fill: #e8eaed;
}

/* bookmarks */
.bookmarks {
    height: 57px;
    padding-bottom: 2px;
    flex: none;
    display: grid;
    grid-template-columns: 92px 113px 106px 173px 218px 114px 106px 121px 148px 105px 107px 300px 64px auto;
    align-items: center;
    background: #353535;
    color: #e8eaed;
    font-size: 14.5px;
    white-space: nowrap;
}
.bm {
    display: flex;
    align-items: center;
    gap: 9px;
}
.bm-icon {
    width: 22px;
    height: 22px;
    flex: none;
}
.bm-apps {
    display: flex;
    align-items: center;
    padding-left: 26px;
    gap: 22px;
}
.bm-sep {
    width: 2px;
    height: 24px;
    background: #000;
}
.bm-more {
    display: flex;
    align-items: center;
    gap: 26px;
}

/* gmail */
.gmail {
    flex: 1;
    display: flex;
    flex-direction: column;
    background: #f6f8fc;
    min-height: 0;
    font-family: Roboto, "Liberation Sans", sans-serif;
    color: #202124;
}
.g-head {
    height: 92px;
    flex: none;
    display: flex;
    align-items: center;
}
.brand {
    width: 365px;
    padding-left: 36px;
    display: flex;
    align-items: center;
    flex: none;
}
.burger {
    width: 29px;
    height: 29px;
    fill: #5f6368;
}
.g-logo {
    width: 44px;
    height: 33px;
    margin-left: 27px;
}
.g-word {
    margin-left: 14px;
    font-size: 31.5px;
    color: #5f6368;
}
.search {
    width: 1025px;
    height: 68px;
    background: #e9f1fb;
    border-radius: 34px;
    display: flex;
    align-items: center;
    padding: 0 24px 0 17px;
    flex: none;
}
.search-icon {
    width: 30px;
    height: 30px;
    fill: #444746;
}
.search-text {
    margin: -3px 0 0 15px;
    font-size: 23px;
    color: #5f6368;
    flex: 1;
}
.search-tune {
    width: 30px;
    height: 30px;
    margin-top: -2px;
    fill: #444746;
}
.head-icons {
    flex: 1;
    display: flex;
    align-items: center;
    padding-left: 217px;
    gap: 32px;
}
.head-icons svg {
    width: 30px;
    height: 30px;
    fill: #444746;
    flex: none;
}
.head-icons .help {
    fill: #80868b;
}
.head-icons .spark {
    width: 33px;
    height: 34px;
    margin-left: -2px;
}
.head-icons .apps {
    width: 24px;
    height: 24px;
    margin-left: -2px;
}
.g-avatar {
    width: 45px;
    height: 45px;
    margin-left: 2px;
    border-radius: 50%;
    background: #0288d1;
    color: #fff;
    font-size: 22px;
    line-height: 45px;
    text-align: center;
}
.g-body {
    flex: 1;
    display: flex;
    min-height: 0;
}

/* left nav */
.sidebar {
    width: 365px;
    flex: none;
    padding-top: 11px;
}
.compose {
    width: 203px;
    height: 79px;
    margin-left: 11px;
    padding-bottom: 2px;
    background: #c2e7ff;
    border-radius: 22px;
    display: flex;
    align-items: center;
    padding-left: 26px;
    color: #001d35;
    font-size: 21px;
    font-weight: 500;
}
.compose svg {
    width: 28px;
    height: 28px;
    margin-right: 26px;
}
.nav {
    margin-top: 23px;
    width: 342px;
}
.nav-item {
    height: 45.5px;
    display: flex;
    align-items: center;
    padding: 0 17px 0 38px;
    font-size: 20.8px;
    color: #202124;
}
.nav-item svg {
    width: 27px;
    height: 27px;
    fill: #444746;
    flex: none;
    margin-right: 26px;
}
.nav-label {
    flex: 1;
}
.nav-count {
    font-size: 17px;
}
.nav-item.current {
    background: #d3e3fd;
    border-radius: 0 23px 23px 0;
    color: #041e49;
    font-weight: 700;
}
.nav-item.current svg {
    fill: #041e49;
}
.nav-item.bold {
    font-weight: 700;
}
.nav-count.light {
    font-weight: 400;
    color: #444746;
}
.labels {
    margin-top: 42px;
    width: 342px;
    padding: 0 12px 0 37px;
    display: flex;
    align-items: center;
    justify-content: space-between;
    font-size: 24px;
    font-weight: 500;
}
.labels svg {
    width: 27px;
    height: 27px;
    fill: #444746;
}

/* message card */
.card {
    width: 1476px;
    height: 743px;
    flex: none;
    position: relative;
    background: #fff;
    border-radius: 22px;
}
.scroll-thumb {
    position: absolute;
    right: 0;
    top: 68px;
    width: 15px;
    height: 593px;
    background: #c8c8c8;
}
.mail-bar {
    height: 66px;
    padding-left: 6px;
    display: flex;
    align-items: center;
}
.mbtn {
    width: 62.5px;
    height: 40px;
    display: flex;
    align-items: center;
    justify-content: center;
}
.mbtn svg {
    width: 26px;
    height: 26px;
    fill: #444746;
}
.mbtn.back {
    width: 62px;
}
.mbtn.first {
    margin-left: 17px;
}
.mbtn.tight {
    margin-left: -5px;
}
.mbar-sep {
    width: 1px;
    height: 30px;
    margin: 0 11px 0 10px;
    background: #e5e7ea;
}
.pager {
    margin-left: auto;
    padding-right: 53px;
    display: flex;
    align-items: center;
    color: #5f6368;
}
.pager-text {
    font-size: 17px;
    margin-right: 28px;
}
.pg {
    width: 30px;
    height: 30px;
    fill: #5f6368;
    margin-right: 27px;
}
.font-mark {
    font-family: "Liberation Sans", sans-serif;
    font-size: 24px;
    font-weight: 700;
    margin-left: -2px;
    margin-right: 10px;
    letter-spacing: -1px;
    color: #5f6368;
}
.font-mark small {
    font-size: 15px;
}
.caret {
    width: 0;
    height: 0;
    border-left: 7px solid transparent;
    border-right: 7px solid transparent;
    border-top: 7px solid #5f6368;
    display: inline-block;
}
.caret.small {
    border-left-width: 6px;
    border-right-width: 6px;
    border-top-width: 6px;
    margin-left: 5px;
    vertical-align: 1px;
}
.subject-row {
    height: 60px;
    margin-top: 19px;
    margin-bottom: 1px;
    padding: 0 46px 0 103px;
    display: flex;
    align-items: center;
    justify-content: space-between;
}
.subject {
    margin: 0;
    font-size: 31.6px;
    font-weight: 400;
    color: #1f1f1f;
}
.subject-tools {
    display: flex;
    gap: 26px;
}
.subject-tools svg {
    width: 27px;
    height: 27px;
    fill: #444746;
}
.message {
    display: flex;
    padding: 18px 46px 0 23px;
}
.sender-pic {
    width: 56px;
    height: 56px;
    border-radius: 50%;
    background: #f1f3f4;
    border: 1px solid #eceff1;
    display: flex;
    align-items: center;
    justify-content: center;
    flex: none;
}
.sender-pic svg {
    width: 36px;
    height: 36px;
    fill: #c4c7c5;
}
.msg-main {
    margin-left: 24px;
    flex: 1;
    min-width: 0;
    font-family: "Liberation Sans", Arial, sans-serif;
}
.msg-head {
    height: 26px;
    display: flex;
    align-items: center;
    justify-content: space-between;
}
.from {
    font-size: 17px;
    color: #5f6368;
}
.from b {
    font-family: Roboto, sans-serif;
    font-size: 21.4px;
    font-weight: 700;
    color: #1f1f1f;
}
.msg-tools {
    display: flex;
    align-items: center;
    gap: 30px;
}
.msg-tools svg {
    width: 27px;
    height: 27px;
    margin-top: 1px;
    fill: #444746;
    color: #444746;
}
.stamp {
    font-family: Roboto, sans-serif;
    font-size: 17px;
    color: #5f6368;
}
.to-me {
    margin-top: 7px;
    font-size: 17.5px;
    color: #5f6368;
}
.msg-text {
    margin-top: 15px;
    width: 1290px;
    font-size: 18.5px;
    line-height: 27.7px;
    color: #222;
}
.msg-text a {
    color: #15c;
}
.reply-row {
    margin-top: 83px;
    margin-left: -1px;
    display: flex;
    gap: 11px;
    font-family: Roboto, sans-serif;
}
.pill {
    height: 51px;
    border: 1px solid #747775;
    border-radius: 26px;
    display: flex;
    align-items: center;
    font-size: 20px;
    font-weight: 500;
    color: #444746;
}
.pill svg {
    width: 25px;
    height: 25px;
    flex: none;
    color: #5f6368;
    margin-right: 14px;
}
.pill.reply {
    width: 149px;
    padding-left: 27px;
}
.pill.forward {
    width: 158px;
    padding-left: 19px;
}
.pill.smile {
    width: 51px;
    margin-left: 1px;
    justify-content: center;
}
.pill.smile svg {
    width: 30px;
    height: 30px;
    margin: 0;
    fill: #333;
}

/* right side panel */
.sidepanel {
    width: 79px;
    flex: none;
    display: flex;
    flex-direction: column;
    align-items: center;
    margin-top: -1px;
    padding-left: 2px;
    padding-bottom: 27px;
}
.sp-item {
    height: 80px;
    display: flex;
    align-items: center;
}
.sp-item svg {
    width: 28px;
    height: 28px;
}
.sp-item.tasks svg {
    margin-top: -2px;
}
.cal-num {
    font-family: Roboto, sans-serif;
    font-size: 10px;
    font-weight: 700;
    fill: #4285f4;
    text-anchor: middle;
}
.sp-divider {
    width: 32px;
    height: 1px;
    margin-top: 23px;
    background: #dadce0;
}
.sp-add {
    width: 28px;
    height: 28px;
    margin-top: 49px;
    fill: #1f1f1f;
}
.sp-chevron {
    width: 26px;
    height: 26px;
    margin-top: auto;
    fill: #1f1f1f;
}

/* windows taskbar */
.taskbar {
    height: 50px;
    flex: none;
    display: flex;
    background: #1c1c1c;
    color: #fff;
    font-family: "Noto Sans", sans-serif;
}
.tb {
    width: 62px;
    height: 50px;
    flex: none;
    position: relative;
    display: flex;
    align-items: center;
    justify-content: center;
}
.tb-start {
    width: 59px;
}
.tb-view {
    margin-right: 2px;
}
.tb.running::after {
    content: "";
    position: absolute;
    left: 6px;
    right: 5px;
    bottom: 0;
    height: 3px;
    background: #76b9ed;
}
.tb.current {
    background: #4a4a4a;
}
.tb.current::after {
    left: 0;
    right: 0;
}
.chrome-l {
    font-size: 13px;
    fill: #fff;
    text-anchor: middle;
}
.tray {
    margin-left: auto;
    padding-right: 31px;
    display: flex;
    align-items: center;
    gap: 12px;
}
.tray-vol {
    margin-left: -4px;
}
.tray-lang {
    font-size: 14px;
    margin-left: 2px;
    color: #e6e6e6;
}
.clock {
    margin-left: 8px;
    width: 60px;
    display: flex;
    flex-direction: column;
    align-items: center;
    font-size: 14px;
    line-height: 23px;
    color: #e6e6e6;
}
.notif {
    margin-left: 15px;
}
```
